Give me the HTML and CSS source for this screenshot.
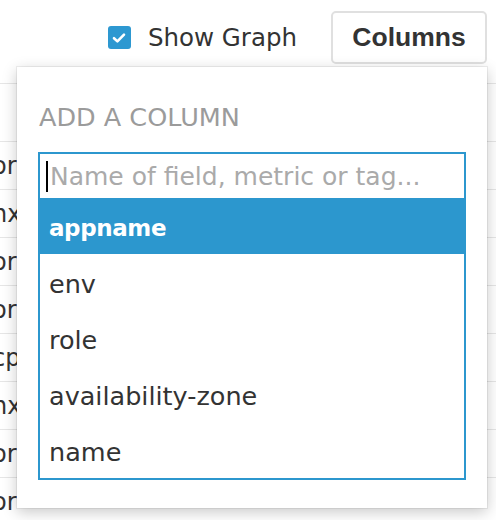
FILE: index.html
```html
<!DOCTYPE html>
<html>
<head>
<meta charset="utf-8">
<link rel="stylesheet" href="styles.css">
</head>
<body>
<div class="page">
  <header class="toolbar">
    <label class="toggle">
      <span class="checkbox">
        <svg width="14" height="12" viewBox="0 0 14 12"><path d="M2 6.2 L5.4 9.4 L12 2.6" fill="none" stroke="#fff" stroke-width="2.6" stroke-linecap="round" stroke-linejoin="round"/></svg>
      </span>
      <span class="toggle-label">Show Graph</span>
    </label>
    <button class="columns-btn">Columns</button>
  </header>

  <div class="table">
    <div class="row head"></div>
    <div class="row"><span class="cell">or</span></div>
    <div class="row"><span class="cell">nx</span></div>
    <div class="row"><span class="cell">or</span></div>
    <div class="row"><span class="cell">or</span></div>
    <div class="row"><span class="cell">cp</span></div>
    <div class="row"><span class="cell">nx</span></div>
    <div class="row"><span class="cell">or</span></div>
    <div class="row"><span class="cell">or</span></div>
  </div>

  <div class="dropdown">
    <div class="title">ADD A COLUMN</div>
    <div class="combo">
      <div class="search"><span class="caret"></span><span class="placeholder">Name of field, metric or tag...</span></div>
      <ul class="options">
        <li class="option active">appname</li>
        <li class="option">env</li>
        <li class="option">role</li>
        <li class="option">availability-zone</li>
        <li class="option">name</li>
      </ul>
    </div>
  </div>
</div>
</body>
</html>
```

FILE: styles.css
```css
* { box-sizing: border-box; }
html, body { margin: 0; padding: 0; background: #fff; }
body { width: 496px; height: 520px; overflow: hidden; font-family: "DejaVu Sans", Verdana, sans-serif; color: #333; }
.page { position: relative; width: 496px; height: 520px; overflow: hidden; }

.toolbar {
  height: 83px;
  display: flex;
  justify-content: flex-end;
  align-items: flex-start;
  padding: 11px 9px 0 0;
}
.toggle { display: flex; align-items: center; height: 53px; margin-right: 34px; }
.checkbox {
  width: 23px; height: 23px; border-radius: 3px; background: #2d98d1;
  display: flex; align-items: center; justify-content: center; margin-right: 17px;
}
.toggle-label { font-size: 24.5px; color: #333; }
.columns-btn {
  width: 156px; height: 53px;
  border: 2px solid #e0e0e0; border-radius: 5px; background: #fff;
  font-family: "Liberation Sans", Arial, sans-serif; font-weight: bold; font-size: 26.5px; color: #333;
  padding: 0; margin: 0;
}

.table { border-top: 1px solid #e6e6e6; }
.row { height: 48px; border-bottom: 1px solid #e6e6e6; display: flex; align-items: center; }
.row.head { height: 58px; }
.cell { margin-left: -8px; font-size: 24px; color: #333; white-space: nowrap; }

.dropdown {
  position: absolute; z-index: 10; left: 17px; top: 67px; width: 470px; height: 441px;
  background: #fff;
  box-shadow: 0 0 0 1px rgba(0,0,0,0.06), 0 4px 14px rgba(0,0,0,0.22);
  padding: 35px 0 0 21px;
}
.title { font-size: 25.5px; color: #9b9b9b; height: 50px; padding-left: 1px; }
.combo { width: 428px; border: 2px solid #2c97ce; }
.search { height: 44px; display: flex; align-items: center; padding-left: 6px; }
.caret { width: 2px; height: 31px; background: #000; margin-right: 2px; }
.placeholder { font-size: 25px; color: #aaa; }
.options { list-style: none; margin: 0; padding: 0; }
.option { height: 56px; display: flex; align-items: center; padding: 3px 0 0 9px; font-size: 25.5px; color: #333; }
.option.active { background: #2c97ce; color: #fff; font-weight: bold; font-size: 23px; letter-spacing: -0.4px; }
```
